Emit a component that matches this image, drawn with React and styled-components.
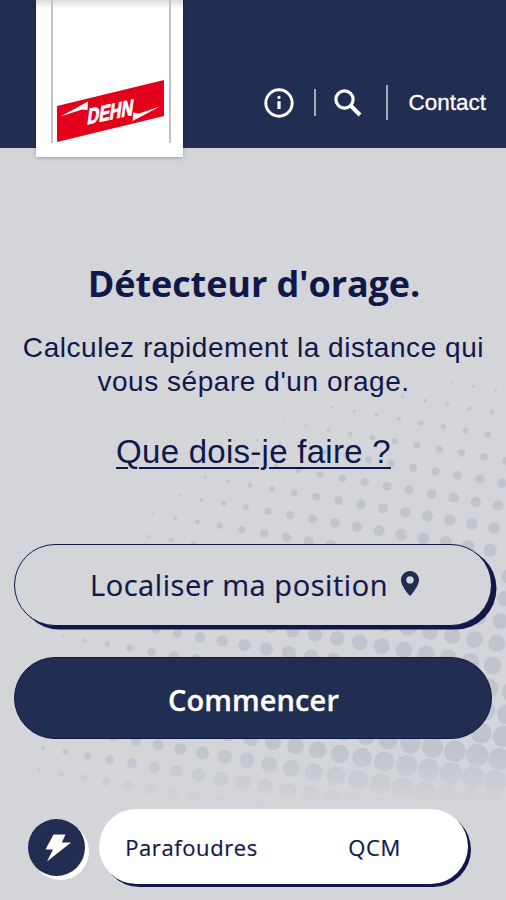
import styled, { createGlobalStyle } from 'styled-components';

const NAVY = '#212d51';
const INK = '#10184a';
const GREY = '#d3d5d9';

// [distance from the focus, dot radius]
const DOT_SIZES = [
    [0, 12],
    [100, 10.9],
    [130, 10.3],
    [184, 8.9],
    [245, 7.8],
    [320, 6],
    [360, 4.9],
    [380, 4.3],
    [450, 1.9],
    [472, 1.1],
    [480, 0],
];

const dotRadius = (distance) => {
    for (let k = 1; k < DOT_SIZES.length; k++) {
        const [d0, r0] = DOT_SIZES[k - 1];
        const [d1, r1] = DOT_SIZES[k];
        if (distance <= d1) {
            return r0 + ((distance - d0) / (d1 - d0)) * (r1 - r0);
        }
    }
    return 0;
};

const dots = [];
for (let i = -25; i < 15; i++) {
    for (let j = -8; j < 20; j++) {
        const x = 387 + i * 22.22 - j * 3.93;
        const y = 486 + i * 3.9 + j * 22.33;
        const r = dotRadius(Math.hypot(x - 480, y - 850));
        if (r > 0 && x > -10 && x < 520 && y < 815) {
            dots.push({ x, y, r });
        }
    }
}

function Halftone() {
    return (
        <HalftoneSvg viewBox="0 0 506 900">
            <defs>
                <linearGradient id="fade" gradientUnits="userSpaceOnUse" x1="0" y1="750" x2="0" y2="806">
                    <stop offset="0" stopColor="#fff" />
                    <stop offset="1" stopColor="#000" />
                </linearGradient>
                <mask id="fadeMask" maskUnits="userSpaceOnUse" x="0" y="0" width="506" height="900">
                    <rect width="506" height="900" fill="url(#fade)" />
                </mask>
            </defs>
            <g fill="#c1c4cc" mask="url(#fadeMask)">
                {dots.map((dot) => (
                    <circle key={`${dot.x}-${dot.y}`} cx={dot.x} cy={dot.y} r={dot.r} />
                ))}
            </g>
        </HalftoneSvg>
    );
}

function Logo() {
    return (
        <LogoCard>
            <LogoFrame>
                <svg width="108" height="64" viewBox="0 0 108 64">
                    <path d="M0 27L107 1V37L0 63Z" fill="#e2001a" />
                    <path d="M3.5 37.5L31 22.5L30.5 31L25 30.5Z" fill="#fff" />
                    <path d="M103 27.5L75.5 42L76.2 33.5L82 34.5Z" fill="#fff" />
                    <text
                        transform="translate(29.8 45.4) skewY(-12) skewX(-8)"
                        fontFamily="'Liberation Sans', sans-serif"
                        fontWeight="700"
                        fontSize="22"
                        fill="#fff"
                        stroke="#fff"
                        strokeWidth="0.9"
                        textLength="45.5"
                        lengthAdjust="spacingAndGlyphs"
                    >
                        DEHN
                    </text>
                </svg>
            </LogoFrame>
        </LogoCard>
    );
}

function App() {
    return (
        <Screen>
            <GlobalStyle />
            <Halftone />
            <Header>
                <Logo />
                <Nav>
                    <svg width="30" height="30" viewBox="0 0 30 30" fill="none" stroke="#fff">
                        <circle cx="15" cy="15" r="13.2" strokeWidth="2.9" />
                        <path d="M15 13.2V21" strokeWidth="3.2" />
                        <circle cx="15" cy="9.4" r="1.6" fill="#fff" stroke="none" />
                    </svg>
                    <Separator $height={27} $left={20} $right={18} />
                    <svg width="28" height="28" viewBox="0 0 28 28" fill="none" stroke="#fff">
                        <circle cx="10.5" cy="10.5" r="8.6" strokeWidth="3.2" />
                        <path d="M16.5 16.5L26 26" strokeWidth="4" />
                    </svg>
                    <Separator $height={35} $left={24} $right={20} />
                    <NavLink>Contact</NavLink>
                </Nav>
            </Header>
            <Content>
                <Title>Détecteur d'orage.</Title>
                <Intro>
                    Calculez rapidement la distance qui
                    <br />
                    vous sépare d'un orage.
                </Intro>
                <HelpLink>Que dois-je faire ?</HelpLink>
                <OutlineButton>
                    <span>Localiser ma position</span>
                    <PinIcon viewBox="0 0 18 25">
                        <path
                            d="M9 0C4 0 0 4 0 9C0 15.5 9 25 9 25S18 15.5 18 9C18 4 14 0 9 0ZM9 5.2A3.7 3.7 0 1 1 9 12.6A3.7 3.7 0 1 1 9 5.2Z"
                            fill={NAVY}
                        />
                    </PinIcon>
                </OutlineButton>
                <PrimaryButton>Commencer</PrimaryButton>
            </Content>
            <Footer>
                <BoltButton>
                    <svg width="26" height="28" viewBox="0 0 26 28">
                        <path d="M8.5 0.5H20.5L16.8 8.5H26L2 27.5L8 15.5H0.5Z" fill="#fff" />
                    </svg>
                </BoltButton>
                <Tabs>
                    <Tab $width={185}>Parafoudres</Tab>
                    <Tab $width={181}>QCM</Tab>
                </Tabs>
            </Footer>
        </Screen>
    );
}

export default App;

const GlobalStyle = createGlobalStyle`
    * {
        box-sizing: border-box;
    }

    body {
        margin: 0;
        background: ${GREY};
    }
`;

const Screen = styled.div`
    position: relative;
    display: flex;
    flex-direction: column;
    width: 506px;
    height: 900px;
    overflow: hidden;
    background: ${GREY};
    color: ${INK};
    font-family: 'Open Sans', sans-serif;
`;

const HalftoneSvg = styled.svg`
    position: absolute;
    inset: 0;
    width: 506px;
    height: 900px;
`;

const Header = styled.header`
    position: relative;
    display: flex;
    justify-content: space-between;
    height: 148px;
    padding: 0 20px 0 36px;
    background: ${NAVY};
`;

const LogoCard = styled.div`
    width: 147px;
    height: 157px;
    padding: 0 12px 0 15px;
    background: linear-gradient(#dcdcdc, #fff 9px);
    box-shadow: 0 1px 4px rgba(0, 0, 0, 0.25);
`;

const LogoFrame = styled.div`
    display: flex;
    align-items: flex-end;
    justify-content: center;
    width: 120px;
    height: 143px;
    border: solid #c4c4c4;
    border-width: 0 2px;
`;

const Nav = styled.nav`
    display: flex;
    align-items: center;
    height: 35px;
    margin-top: 85px;
`;

const Separator = styled.span`
    width: 2px;
    height: ${(props) => props.$height}px;
    margin: 0 ${(props) => props.$right}px 0 ${(props) => props.$left}px;
    background: #a9adbb;
`;

const NavLink = styled.a`
    color: #fff;
    font: 22.5px/35px 'Liberation Sans', sans-serif;
    -webkit-text-stroke: 0.3px #fff;
`;

const Content = styled.main`
    position: relative;
    display: flex;
    flex-direction: column;
    height: 661px;
    padding: 109px 14px 0;
    text-align: center;
`;

const Title = styled.h1`
    margin: 0 0 20px 2px;
    font-size: 36px;
    font-weight: 700;
    line-height: 54px;
    letter-spacing: -0.1px;
`;

const Intro = styled.p`
    margin: 0 -11px 34px -10px;
    font: 28px/34px 'Liberation Sans', sans-serif;
    letter-spacing: 0.55px;
    white-space: nowrap;
`;

const HelpLink = styled.a`
    height: 38px;
    margin-bottom: 73px;
    padding-left: 1px;
    font: 33px/38px 'Liberation Sans', sans-serif;
    letter-spacing: 0.27px;
    text-decoration: underline;
    text-decoration-thickness: 2px;
    text-underline-offset: 4px;
`;

const Button = styled.button`
    display: flex;
    flex-shrink: 0;
    align-items: center;
    justify-content: center;
    width: 478px;
    height: 82px;
    padding: 0;
    border: 1px solid ${INK};
    border-radius: 41px;
    font: 600 29px/40px 'Open Sans', sans-serif;
`;

const OutlineButton = styled(Button)`
    gap: 13px;
    margin-bottom: 31px;
    padding-left: 3px;
    background: ${GREY};
    color: ${INK};
    font-weight: 500;
    letter-spacing: 0.55px;
    box-shadow: 4.5px 3.5px 0 ${INK};
    -webkit-text-stroke: 0.2px ${INK};
`;

const PinIcon = styled.svg`
    width: 18px;
    height: 25px;
    margin-bottom: 3px;
`;

const PrimaryButton = styled(Button)`
    padding: 3px 0 0 1px;
    background: ${NAVY};
    color: #fff;
    letter-spacing: 0.1px;
    -webkit-text-stroke: 0.3px #fff;
`;

const Footer = styled.footer`
    position: relative;
    display: flex;
    gap: 14px;
    padding-left: 28px;
`;

const BoltButton = styled.button`
    display: flex;
    align-items: center;
    justify-content: center;
    width: 57px;
    height: 57px;
    margin-top: 10px;
    padding: 1px 0 0 3px;
    border: none;
    border-radius: 50%;
    background: ${NAVY};
    box-shadow: 4px 4px 0 #fff;
`;

const Tabs = styled.div`
    display: flex;
    align-items: center;
    width: 369px;
    height: 75px;
    border-radius: 38px;
    background: #fff;
    box-shadow: 3px 3px 0 ${INK};
`;

const Tab = styled.a`
    width: ${(props) => props.$width}px;
    font-size: 22px;
    font-weight: 500;
    letter-spacing: 0.6px;
    text-align: center;
    -webkit-text-stroke: 0.2px ${INK};
`;
